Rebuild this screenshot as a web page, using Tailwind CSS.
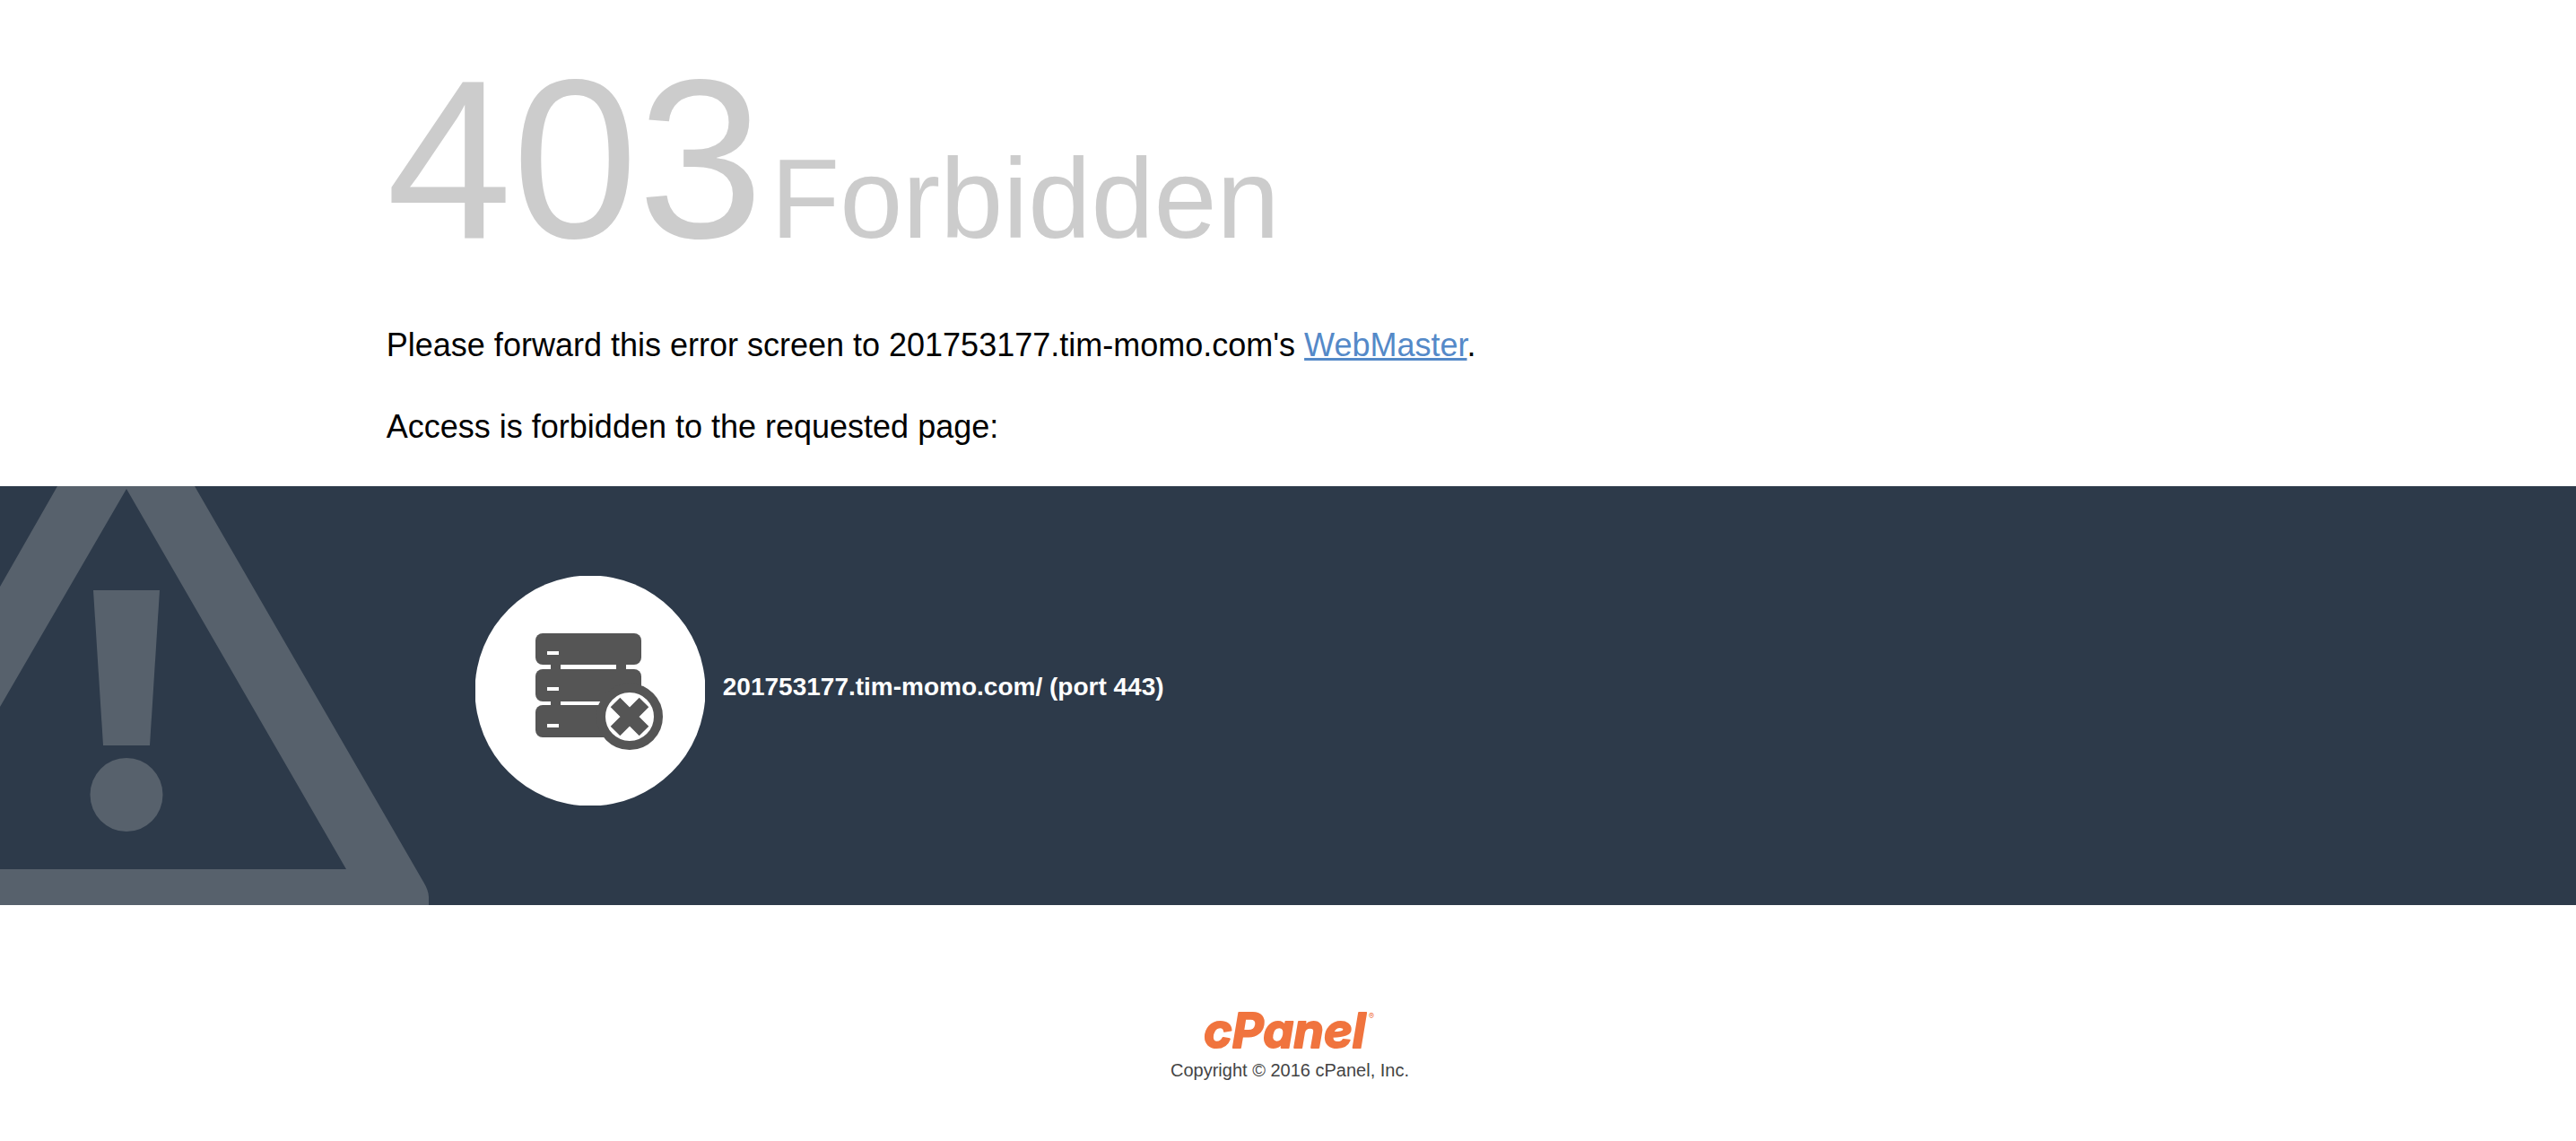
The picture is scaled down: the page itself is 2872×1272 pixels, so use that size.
<!DOCTYPE html>
<html lang="en">
<head>
<meta charset="utf-8">
<meta name="viewport" content="width=device-width, initial-scale=1">
<title>403 Forbidden</title>
<script src="https://cdn.jsdelivr.net/npm/@tailwindcss/browser@4"></script>
</head>
<body class="bg-white text-black font-['Liberation_Sans',Arial,sans-serif]">
<header class="px-[15%] pt-[52px] pb-11 text-[36px] leading-[44px]">
  <h1 class="flex items-baseline gap-2 text-[#ccc]">
    <span class="text-[252px] leading-none">403</span>
    <span class="text-[126px] leading-none">Forbidden</span>
  </h1>
  <p class="mt-[59px]">Please forward this error screen to 201753177.tim-momo.com's <a href="mailto:webmaster@201753177.tim-momo.com" class="text-[#5489c8] underline">WebMaster</a>.</p>
  <p class="mt-[47px]">Access is forbidden to the requested page:</p>
</header>
<main class="relative overflow-hidden bg-[#2d3a4a] px-[15%] pt-[100px] pb-[111px]">
  <svg class="absolute left-0 top-0" width="478" height="467" viewBox="0 0 478 467" fill="#57616c" aria-hidden="true">
    <path fill-rule="evenodd" d="M64 0H217L472 441Q478 451 478 458V467H0V427H386L141 3L0 246V112Z"/>
    <path d="M104 116H178L167 289H115Z"/>
    <ellipse cx="141" cy="344" rx="40.500" ry="41"/>
  </svg>
  <div class="relative flex items-center gap-5 pl-[99px]">
    <svg class="shrink-0" width="256" height="256" viewBox="0 0 256 256" aria-hidden="true">
      <circle cx="128" cy="128" r="128.500" fill="#fff"/>
      <g fill="#555">
        <rect x="67" y="64" width="118" height="35" rx="8"/>
        <rect x="67" y="104" width="118" height="36" rx="8"/>
        <rect x="67" y="144" width="118" height="36" rx="8"/>
        <path d="M84 95h11v54H84zM157 95h11v54h-11z"/>
      </g>
      <path d="M80 84h13v4H80zM80 124h13v4H80zM80 165h13v4H80z" fill="#fff"/>
      <circle cx="172" cy="157" r="32" fill="#fff" stroke="#555" stroke-width="10"/>
      <path d="M156 141l32 32M188 141l-32 32" stroke="#555" stroke-width="15"/>
    </svg>
    <p class="pb-2 text-[28px] leading-8 font-bold text-white">201753177.tim-momo.com/ (port 443)</p>
  </div>
</main>
<footer class="flex flex-col items-center pt-[120px] pb-12 pl-1 text-[20px] leading-6 text-[#444]">
  <a href="http://cpanel.com/" class="flex flex-col items-center gap-3">
    <svg class="overflow-visible font-['Inter',sans-serif] font-bold italic" width="190" height="40" viewBox="0 0 190 40" fill="#f0743e" role="img" aria-label="cPanel">
      <text x="-1" y="39" font-size="54" stroke="#f0743e" stroke-width="2" stroke-linejoin="round">cPanel</text>
      <text x="183" y="7" font-size="9" font-weight="400" font-style="normal">®</text>
    </svg>
    <span>Copyright © 2016 cPanel, Inc.</span>
  </a>
</footer>
</body>
</html>
